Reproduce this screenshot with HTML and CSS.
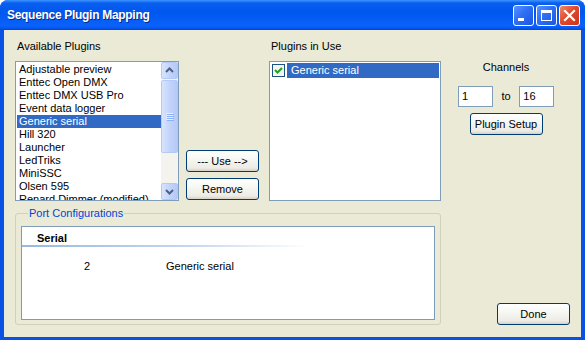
FILE: index.html
```html
<!DOCTYPE html>
<html lang="en">
<head>
    <meta charset="UTF-8">
    <title>Sequence Plugin Mapping</title>
    <link rel="stylesheet" href="styles.css">
</head>
<body>
    <div class="window">
        <div class="titlebar">
            <span class="title">Sequence Plugin Mapping</span>
            <div class="caption-btns">
                <span class="cap-btn">
                    <svg width="19" height="19" viewBox="0 0 19 19"><rect x="4" y="12" width="6" height="3" fill="#fff"/></svg>
                </span>
                <span class="cap-btn">
                    <svg width="19" height="19" viewBox="0 0 19 19"><rect x="4.5" y="4.5" width="10" height="10" fill="none" stroke="#fff"/><rect x="4" y="4" width="11" height="3" fill="#fff"/></svg>
                </span>
                <span class="cap-btn close">
                    <svg width="19" height="19" viewBox="0 0 19 19"><path d="M5 5 L14 14 M14 5 L5 14" stroke="#fff" stroke-width="2.2" stroke-linecap="square"/></svg>
                </span>
            </div>
        </div>

        <div class="client">
            <div class="top-row">
                <div class="col-available">
                    <div class="label">Available Plugins</div>
                    <div class="listbox">
                        <ul class="items">
                            <li>Adjustable preview</li>
                            <li>Enttec Open DMX</li>
                            <li>Enttec DMX USB Pro</li>
                            <li>Event data logger</li>
                            <li class="selected">Generic serial</li>
                            <li>Hill 320</li>
                            <li>Launcher</li>
                            <li>LedTriks</li>
                            <li>MiniSSC</li>
                            <li>Olsen 595</li>
                            <li>Renard Dimmer (modified)</li>
                        </ul>
                        <div class="scrollbar">
                            <div class="sb-btn">
                                <svg width="15" height="15" viewBox="0 0 15 15"><path d="M4 9 L7.5 5.5 L11 9" fill="none" stroke="#4d6185" stroke-width="2"/></svg>
                            </div>
                            <div class="sb-track">
                                <div class="sb-thumb">
                                    <svg width="8" height="8" viewBox="0 0 8 8"><path d="M0 0.5 H7 M0 2.5 H7 M0 4.5 H7 M0 6.5 H7" stroke="#e8effd"/><path d="M1 1.5 H8 M1 3.5 H8 M1 5.5 H8 M1 7.5 H8" stroke="#8cb0f8"/></svg>
                                </div>
                            </div>
                            <div class="sb-btn">
                                <svg width="15" height="15" viewBox="0 0 15 15"><path d="M4 6 L7.5 9.5 L11 6" fill="none" stroke="#4d6185" stroke-width="2"/></svg>
                            </div>
                        </div>
                    </div>
                </div>

                <div class="col-actions">
                    <button class="xp-btn">--- Use --&gt;</button>
                    <button class="xp-btn">Remove</button>
                </div>

                <div class="col-inuse">
                    <div class="label">Plugins in Use</div>
                    <div class="listbox checklist">
                        <div class="check-item">
                            <span class="checkbox">
                                <svg width="11" height="11" viewBox="0 0 11 11"><path d="M2 5 L4.5 7.5 L9 3" fill="none" stroke="#21a121" stroke-width="2"/></svg>
                            </span>
                            <span class="check-text">Generic serial</span>
                        </div>
                    </div>
                </div>

                <div class="col-channels">
                    <div class="channels-label">Channels</div>
                    <div class="range">
                        <span class="textbox">1</span>
                        <span class="to">to</span>
                        <span class="textbox">16</span>
                    </div>
                    <button class="xp-btn setup-btn">Plugin Setup</button>
                </div>
            </div>

            <div class="bottom-row">
                <fieldset class="group">
                    <legend>Port Configurations</legend>
                    <div class="listview">
                        <div class="lv-header">Serial</div>
                        <div class="lv-row">
                            <span class="lv-port">2</span>
                            <span class="lv-name">Generic serial</span>
                        </div>
                    </div>
                </fieldset>
                <button class="xp-btn done-btn">Done</button>
            </div>
        </div>
    </div>
</body>
</html>
```

FILE: styles.css
```css
* {
    box-sizing: border-box;
    margin: 0;
    padding: 0;
}

body {
    background-color: #ffffff;
    font-family: 'Liberation Sans', Arial, sans-serif;
    font-size: 11px;
    line-height: 13px;
    color: #000;
}

.window {
    width: 585px;
    height: 340px;
    display: flex;
    flex-direction: column;
    border-radius: 8px 8px 0 0;
    overflow: hidden;
    background-color: #0a52e6;
}

/* title bar */
.titlebar {
    height: 30px;
    flex: none;
    display: flex;
    align-items: center;
    justify-content: space-between;
    padding: 0 5px 0 7px;
    background: linear-gradient(to bottom, #3d95ff 0%, #0a5ff0 10%, #0057ee 40%, #0b62fa 85%, #0559f4 93%, #0046d5 100%);
}

.title {
    color: #fff;
    font-family: 'Liberation Sans', Arial, sans-serif;
    font-weight: bold;
    font-size: 12px;
    letter-spacing: -0.3px;
    text-shadow: 1px 1px 0 #0a2a8c;
    padding-top: 1px;
}

.caption-btns {
    display: flex;
    gap: 2px;
}

.cap-btn {
    width: 21px;
    height: 21px;
    border: 1px solid #fff;
    border-radius: 3px;
    display: flex;
    align-items: center;
    justify-content: center;
    background: linear-gradient(135deg, #5a92ff 0%, #2f6ff5 45%, #1c55e0 100%);
}

.cap-btn.close {
    background: linear-gradient(135deg, #f08a6c 0%, #e2492b 45%, #c93617 100%);
}

/* client area */
.client {
    flex: 1;
    margin: 0 4px 4px 4px;
    background-color: #eaead6;
    padding: 10px 0 12px 11px;
    display: flex;
    flex-direction: column;
}

.top-row {
    display: flex;
    align-items: flex-start;
}

.label {
    height: 13px;
    margin-bottom: 8px;
    padding-left: 2px;
}

.col-available {
    width: 164px;
}

.listbox {
    height: 140px;
    border: 1px solid #7f9db9;
    background-color: #fff;
    display: flex;
    overflow: hidden;
}

.items {
    list-style-type: none;
    flex: 1;
    padding-top: 1px;
    overflow: hidden;
}

.items li {
    height: 13px;
    margin-left: 1px;
    padding-left: 2px;
    white-space: nowrap;
}

.items li.selected {
    background-color: #316ac5;
    color: #fff;
}

.scrollbar {
    width: 17px;
    flex: none;
    display: flex;
    flex-direction: column;
    background-color: #f4f3ee;
}

.sb-btn,
.sb-thumb {
    border: 1px solid #b5c9f5;
    border-radius: 2px;
    background: linear-gradient(to right, #d8e4fd 0%, #c3d4fb 50%, #b4c9f7 100%);
    display: flex;
    align-items: center;
    justify-content: center;
}

.sb-btn {
    height: 17px;
    flex: none;
}

.sb-track {
    flex: 1;
    padding-top: 1px;
}

.sb-thumb {
    height: 73px;
}

.col-actions {
    width: 73px;
    margin-left: 7px;
    align-self: stretch;
    display: flex;
    flex-direction: column;
    justify-content: flex-end;
    gap: 6px;
    padding-bottom: 1px;
}

.xp-btn {
    height: 22px;
    border: 1px solid #003c74;
    border-radius: 3px;
    background: linear-gradient(to bottom, #ffffff 0%, #f7f7f3 40%, #ecebe4 85%, #d6d0c5 100%);
    font-family: 'Liberation Sans', Arial, sans-serif;
    font-size: 11px;
    color: #000;
    width: 73px;
}

.col-inuse {
    width: 172px;
    margin-left: 10px;
}

.checklist {
    flex-direction: column;
    padding: 1px 1px 0 2px;
}

.check-item {
    display: flex;
    align-items: center;
    height: 15px;
}

.checkbox {
    width: 13px;
    height: 13px;
    border: 1px solid #1c5180;
    background-color: #f4f4f0;
    display: flex;
    align-items: center;
    justify-content: center;
    margin-right: 2px;
}

.check-text {
    flex: 1;
    height: 15px;
    line-height: 15px;
    background-color: #316ac5;
    color: #fff;
    padding-left: 4px;
}

.col-channels {
    width: 96px;
    margin-left: 17px;
    display: flex;
    flex-direction: column;
    align-items: center;
    padding-top: 21px;
}

.channels-label {
    height: 13px;
}

.range {
    display: flex;
    align-items: center;
    width: 96px;
    margin-top: 12px;
}

.textbox {
    width: 35px;
    height: 21px;
    border: 1px solid #7f9db9;
    background-color: #fff;
    padding: 3px 0 0 3px;
}

.to {
    width: 27px;
    text-align: center;
}

.setup-btn {
    margin-top: 6px;
}

/* bottom part */
.bottom-row {
    display: flex;
    align-items: flex-end;
    margin-top: 6px;
}

.group {
    width: 426px;
    border: 1px solid #d0d0bf;
    border-radius: 3px;
    padding: 0 5px 4px 5px;
}

.group legend {
    color: #0046d5;
    padding: 0 1px;
    margin-left: 7px;
    line-height: 13px;
}

.listview {
    height: 94px;
    margin-top: 6px;
    border: 1px solid #7f9db9;
    background-color: #fff;
}

.lv-header {
    height: 20px;
    padding: 5px 0 0 15px;
    font-weight: bold;
    border-bottom: 2px solid;
    border-image: linear-gradient(to right, #9ab8dc 0%, #c3d6ec 40%, #ffffff 70%) 1;
}

.lv-row {
    display: flex;
    margin-top: 13px;
}

.lv-port {
    width: 68px;
    text-align: right;
}

.lv-name {
    margin-left: 76px;
}

.done-btn {
    margin-left: 56px;
}
```
